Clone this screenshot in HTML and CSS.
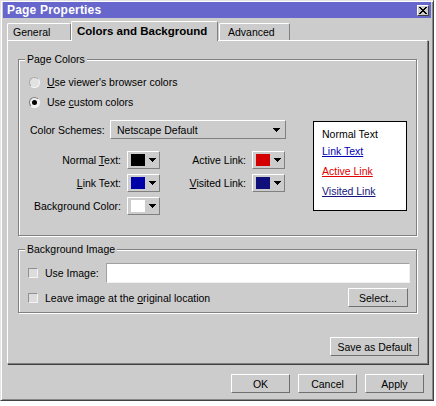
FILE: index.html
```html
<!DOCTYPE html>
<html>
<head>
<meta charset="utf-8">
<link rel="stylesheet" href="styles.css">
</head>
<body>
<div class="window">
  <div class="titlebar">
    <span class="title">Page Properties</span>
    <span class="close"><svg width="8" height="7" viewBox="0 0 8 7"><path d="M0 0h2v1h1v1h2V1h1V0h2v1H7v1H6v1H5v1h1v1h1v1h1v1H6V6H5V5H3v1H2v1H0V6h1V5h1V4h1V3H2V2H1V1H0z" fill="#000"/></svg></span>
  </div>
  <div class="tabs">
    <div class="tab tab-general">General</div>
    <div class="tab tab-active">Colors and Background</div>
    <div class="tab tab-adv">Advanced</div>
  </div>
  <div class="panel">
    <div class="group group-colors">
      <div class="legend">Page Colors</div>
      <div class="opt opt-first"><span class="radio radio-off"></span><span><u>U</u>se viewer's browser colors</span></div>
      <div class="opt"><span class="radio radio-on"><span class="dot"></span></span><span>Use <u>c</u>ustom colors</span></div>
      <div class="colors-body">
        <div class="colors-left">
          <div class="scheme-row">
            <span class="scheme-label">Color Schemes:</span>
            <div class="select"><span>Netscape Default</span><svg class="arr" width="7" height="4" viewBox="0 0 7 4"><path d="M0 0h7v1H0zM1 1h5v1H1zM2 2h3v1H2zM3 3h1v1H3z"/></svg></div>
          </div>
          <div class="swatches">
            <span class="lbl">Normal <u>T</u>ext:</span>
            <div class="swatch"><span class="chip chip-black"></span><svg class="arr" width="7" height="4" viewBox="0 0 7 4"><path d="M0 0h7v1H0zM1 1h5v1H1zM2 2h3v1H2zM3 3h1v1H3z"/></svg></div>
            <span class="lbl">Active Link:</span>
            <div class="swatch"><span class="chip chip-red"></span><svg class="arr" width="7" height="4" viewBox="0 0 7 4"><path d="M0 0h7v1H0zM1 1h5v1H1zM2 2h3v1H2zM3 3h1v1H3z"/></svg></div>
            <span class="lbl"><u>L</u>ink Text:</span>
            <div class="swatch"><span class="chip chip-blue"></span><svg class="arr" width="7" height="4" viewBox="0 0 7 4"><path d="M0 0h7v1H0zM1 1h5v1H1zM2 2h3v1H2zM3 3h1v1H3z"/></svg></div>
            <span class="lbl"><u>V</u>isited Link:</span>
            <div class="swatch"><span class="chip chip-navy"></span><svg class="arr" width="7" height="4" viewBox="0 0 7 4"><path d="M0 0h7v1H0zM1 1h5v1H1zM2 2h3v1H2zM3 3h1v1H3z"/></svg></div>
            <span class="lbl">Background Color:</span>
            <div class="swatch"><span class="chip chip-white"></span><svg class="arr" width="7" height="4" viewBox="0 0 7 4"><path d="M0 0h7v1H0zM1 1h5v1H1zM2 2h3v1H2zM3 3h1v1H3z"/></svg></div>
          </div>
        </div>
        <div class="preview">
          <span class="pv pv-normal">Normal Text</span>
          <span class="pv pv-link">Link Text</span>
          <span class="pv pv-active">Active Link</span>
          <span class="pv pv-visited">Visited Link</span>
        </div>
      </div>
    </div>
    <div class="group group-bg">
      <div class="legend">Background Image</div>
      <div class="bg-row bg-row1">
        <span class="check"></span><span class="txt">Use Image:</span>
        <div class="field"></div>
      </div>
      <div class="bg-row bg-row2">
        <span class="check"></span><span class="txt">Leave image at the <u>o</u>riginal location</span>
        <div class="btn btn-select">Select...</div>
      </div>
    </div>
    <div class="btn btn-save">Save as Default</div>
  </div>
  <div class="footer">
    <div class="btn btn-dlg">OK</div>
    <div class="btn btn-dlg">Cancel</div>
    <div class="btn btn-dlg">Apply</div>
  </div>
</div>
</body>
</html>
```

FILE: styles.css
```css
* { box-sizing: border-box; }

body {
  margin: 0;
  background: #ffffff;
  font-family: "Liberation Sans", Arial, sans-serif;
  font-size: 10.5px;
  color: #000;
}

.window {
  width: 434px;
  height: 401px;
  background: #cccccc;
  border: 1px solid;
  border-color: #e4e4e4 #404040 #404040 #e4e4e4;
  box-shadow: inset 1px 1px 0 #ffffff, inset -1px -1px 0 #888888;
  padding: 1px 2px;
  display: flex;
  flex-direction: column;
}

.titlebar {
  height: 16px;
  background: #6666cc;
  color: #fff;
  font-weight: bold;
  font-size: 12px;
  display: flex;
  align-items: center;
  justify-content: space-between;
  padding: 0 2px 0 4px;
}
.title { line-height: 16px; letter-spacing: 0.2px; }

.close {
  width: 12px;
  height: 11px;
  background: #cccccc;
  border: 1px solid;
  border-color: #fff #404040 #404040 #fff;
  display: flex;
  align-items: center;
  justify-content: center;
}

.tabs {
  display: flex;
  align-items: flex-end;
  height: 19px;
  margin: 3px 0 0 4px;
}
.tab {
  height: 17px;
  border: 1px solid;
  border-bottom: none;
  border-color: #fff #808080 #808080 #fff;
  border-radius: 2px 2px 0 0;
  line-height: 16px;
  padding-left: 5px;
  white-space: nowrap;
}
.tab-general { width: 64px; }
.tab-active {
  width: 147px;
  height: 20px;
  margin-bottom: -1px;
  position: relative;
  z-index: 1;
  background: #cccccc;
  font-weight: bold;
  font-size: 11.5px;
  line-height: 18px;
}
.tab-adv { width: 71px; margin-left: 1px; padding-left: 8px; }

.panel {
  margin-left: 4px;
  width: 421px;
  height: 324px;
  border: 1px solid;
  border-color: #fff #808080 #808080 #fff;
  box-shadow: 1px 1px 0 #404040;
  display: flex;
  flex-direction: column;
}

.group {
  margin: 0 10px;
  border: 1px solid #808080;
  box-shadow: 1px 1px 0 #fff, inset 1px 1px 0 #fff;
}
.group-colors { margin-top: 18px; height: 177px; }
.group-bg { margin-top: 13px; height: 64px; }

.legend {
  margin: -7px 0 0 6px;
  padding: 0 2px;
  line-height: 12px;
  background: #cccccc;
  width: max-content;
}

.opt {
  display: flex;
  align-items: center;
  height: 20px;
  padding-left: 10px;
  gap: 7px;
  white-space: nowrap;
}
.opt-first { margin-top: 7px; }

.radio {
  width: 11px;
  height: 11px;
  border-radius: 50%;
  border: 1px solid;
  border-color: #808080 #f4f4f4 #f4f4f4 #808080;
  display: flex;
  align-items: center;
  justify-content: center;
}
.radio-off { background: #e2e2e2; border-color: #a8a8a8 #f4f4f4 #f4f4f4 #a8a8a8; }
.radio-on { background: #f0f0f0; }
.dot { width: 5px; height: 5px; border-radius: 50%; background: #000; }

.colors-body {
  display: flex;
  margin-top: 8px;
  padding-left: 11px;
}
.scheme-row {
  display: flex;
  align-items: center;
  height: 19px;
}
.scheme-label { width: 80px; white-space: nowrap; }
.select {
  width: 176px;
  height: 19px;
  border: 1px solid;
  border-color: #fff #808080 #808080 #fff;
  display: flex;
  align-items: center;
  justify-content: space-between;
  padding: 0 5px 0 6px;
}
.arr { display: block; fill: #000; }

.swatches {
  display: grid;
  grid-template-columns: 91px 33px 80px 33px;
  grid-auto-rows: 18px;
  column-gap: 6px;
  row-gap: 5px;
  margin-top: 12px;
  align-items: center;
}
.lbl { text-align: right; white-space: nowrap; }
.swatch {
  width: 33px;
  height: 18px;
  border: 1px solid;
  border-color: #fff #808080 #808080 #fff;
  display: flex;
  align-items: center;
  padding-left: 3px;
  gap: 4px;
}
.chip { width: 14px; height: 12px; }
.chip-black { background: #000000; }
.chip-red { background: #d40000; }
.chip-blue { background: #0000a8; }
.chip-navy { background: #10107a; }
.chip-white { background: #ffffff; }

.preview {
  width: 94px;
  height: 90px;
  margin: 1px 0 0 27px;
  background: #fff;
  border: 1px solid #000;
  padding: 2px 0 0 8px;
  display: flex;
  flex-direction: column;
}
.pv { line-height: 20px; height: 20px; white-space: nowrap; }
.pv-normal { height: 17px; }
.pv-link { color: #0000b4; text-decoration: underline; }
.pv-active { color: #e00000; text-decoration: underline; }
.pv-visited { color: #14147e; text-decoration: underline; }

.bg-row {
  display: flex;
  align-items: center;
  padding: 0 8px 0 9px;
  gap: 7px;
}
.txt { white-space: nowrap; flex-shrink: 0; }
.bg-row1 { margin-top: 8px; height: 20px; }
.bg-row2 { margin-top: 5px; height: 19px; }
.check {
  width: 10px;
  height: 10px;
  flex-shrink: 0;
  background: #dcdcdc;
  border: 1px solid;
  border-color: #909090 #f4f4f4 #f4f4f4 #909090;
}
.field {
  width: 304px;
  height: 20px;
  margin-left: auto;
  flex-shrink: 0;
  background: #fff;
  border: 1px solid;
  border-color: #a0a0a0 #f0f0f0 #f0f0f0 #a0a0a0;
}

.btn {
  height: 19px;
  background: #cccccc;
  border: 1px solid;
  border-color: #fff #707070 #707070 #fff;
  display: flex;
  align-items: center;
  justify-content: center;
  white-space: nowrap;
  flex-shrink: 0;
}
.btn-select { width: 60px; margin-left: auto; }
.btn-save {
  width: 89px;
  align-self: flex-end;
  margin: auto 8px 7px 0;
}

.footer {
  display: flex;
  justify-content: flex-end;
  gap: 8px;
  margin: 10px 7px 0 0;
}
.btn-dlg { width: 59px; }
```
